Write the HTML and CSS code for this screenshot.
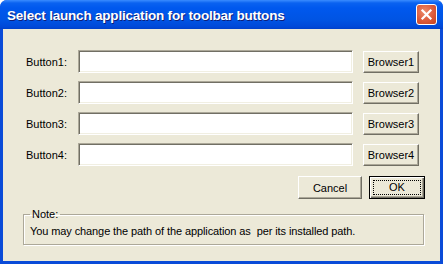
FILE: index.html
```html
<!DOCTYPE html>
<html lang="en">
<head>
    <meta charset="UTF-8">
    <title>Select launch application for toolbar buttons</title>
    <link rel="stylesheet" href="styles.css">
</head>
<body>
    <div class="window">
        <div class="titlebar">
            <span class="title">Select launch application for toolbar buttons</span>
            <button class="close" type="button" aria-label="Close">
                <svg width="13" height="13" viewBox="0 0 13 13">
                    <path d="M2.5 2.5 L10.5 10.5 M10.5 2.5 L2.5 10.5" stroke="#fff" stroke-width="2.2" stroke-linecap="square"/>
                </svg>
            </button>
        </div>
        <div class="content">
            <div class="rows">
                <label for="b1">Button1:</label>
                <input class="field" id="b1" type="text">
                <button class="btn" type="button">Browser1</button>

                <label for="b2">Button2:</label>
                <input class="field" id="b2" type="text">
                <button class="btn" type="button">Browser2</button>

                <label for="b3">Button3:</label>
                <input class="field" id="b3" type="text">
                <button class="btn" type="button">Browser3</button>

                <label for="b4">Button4:</label>
                <input class="field" id="b4" type="text">
                <button class="btn" type="button">Browser4</button>
            </div>
            <div class="actions">
                <button class="btn cancel" type="button">Cancel</button>
                <button class="btn ok" type="button"><span class="focus">OK</span></button>
            </div>
            <fieldset class="note">
                <legend>Note:</legend>
                You may change the path of the application as &nbsp;per its installed path.
            </fieldset>
        </div>
    </div>
</body>
</html>
```

FILE: styles.css
```css
/* XP style dialog */
body {
    margin: 0;
    background-color: #fff;
    font-family: "Liberation Sans", Arial, sans-serif;
    font-size: 11px;
    color: #000;
}
.window {
    width: 443px;
    height: 264px;
    display: flex;
    flex-direction: column;
    background-color: #0A4BD8;
    border-radius: 7px 7px 0 0;
    overflow: hidden;
}
.titlebar {
    height: 29px;
    flex: none;
    display: flex;
    align-items: center;
    padding: 0 6px 0 7px;
    background: linear-gradient(#3A8CFF 0, #0A62F0 3px, #0058EE 8px, #0054E3 20px, #0048D8 27px, #0040C8 29px);
}
.title {
    flex: 1;
    color: #fff;
    font-weight: bold;
    font-size: 13.5px;
    letter-spacing: -0.2px;
    text-shadow: 1px 1px 0 #0F1F78;
    padding-top: 2px;
}
.close {
    width: 21px;
    height: 21px;
    padding: 0;
    border: 1px solid #fff;
    border-radius: 3px;
    background: radial-gradient(circle at 40% 35%, #EC8C6C 0, #DC5A3A 55%, #C4421E 100%);
    display: flex;
    align-items: center;
    justify-content: center;
}
.content {
    flex: 1;
    margin: 0 3px 3px;
    background-color: #ECE9D8;
    padding: 21px 15px 0 20px;
}
.rows {
    display: grid;
    grid-template-columns: 45px 275px 56px;
    column-gap: 10px;
    row-gap: 8px;
    align-items: center;
}
.rows label {
    padding-left: 3px;
    white-space: nowrap;
}
.field {
    height: 23px;
    box-sizing: border-box;
    margin: 0;
    border: 1px solid;
    border-color: #ACA899 #fff #fff #ACA899;
    box-shadow: inset 1px 1px 0 #716F64, inset -1px -1px 0 #F1EFE2;
    background-color: #fff;
    outline: none;
}
.btn {
    height: 23px;
    box-sizing: border-box;
    margin: 0;
    padding: 0;
    font-family: inherit;
    font-size: 11px;
    color: #000;
    background-color: #ECE9D8;
    border: 1px solid;
    border-color: #fff #716F64 #716F64 #fff;
    box-shadow: inset -1px -1px 0 #ACA899;
}
.rows .btn {
    height: 22px;
}
.actions {
    display: flex;
    justify-content: flex-end;
    gap: 7px;
    margin-top: 10px;
}
.cancel {
    width: 64px;
}
.ok {
    width: 56px;
    border: 1px solid #000;
    box-shadow: inset 1px 1px 0 #fff, inset -1px -1px 0 #716F64, inset -2px -2px 0 #ACA899;
    padding: 3px;
}
.focus {
    display: block;
    height: 100%;
    box-sizing: border-box;
    border: 1px dotted #000;
    line-height: 13px;
}
.note {
    margin: 9px 0 0 0;
    padding: 4px 6px 6px 6px;
    width: 401px;
    box-sizing: border-box;
    border: 1px solid #ACA899;
    box-shadow: 1px 1px 0 #fff, inset 1px 1px 0 #fff;
    line-height: 13px;
    letter-spacing: -0.1px;
}
.note legend {
    padding: 0 2px;
    margin-left: 0;
    line-height: 13px;
    letter-spacing: 0;
}
```
